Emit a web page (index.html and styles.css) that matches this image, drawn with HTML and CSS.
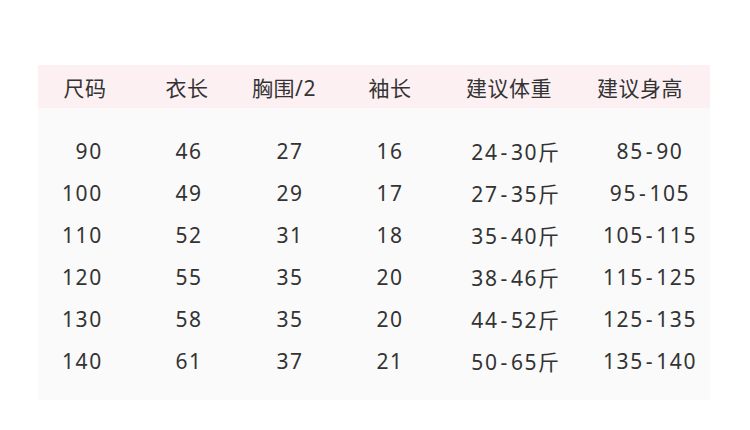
FILE: index.html
```html
<!DOCTYPE html>
<html lang="zh">
<head>
<meta charset="utf-8">
<link rel="stylesheet" href="styles.css">
</head>
<body>
<div class="table">
  <div class="row head">
    <div class="c c1">尺码</div><div class="c c2">衣长</div><div class="c c3">胸围/2</div><div class="c c4">袖长</div><div class="c c5">建议体重</div><div class="c c6">建议身高</div>
  </div>
  <div class="body">
    <div class="row"><div class="c c1">&#8199;90</div><div class="c c2">46</div><div class="c c3">27</div><div class="c c4">16</div><div class="c c5">24<span class="d">-</span>30斤</div><div class="c c6">85<span class="d">-</span>90</div></div>
    <div class="row"><div class="c c1">100</div><div class="c c2">49</div><div class="c c3">29</div><div class="c c4">17</div><div class="c c5">27<span class="d">-</span>35斤</div><div class="c c6">95<span class="d">-</span>105</div></div>
    <div class="row"><div class="c c1">110</div><div class="c c2">52</div><div class="c c3">31</div><div class="c c4">18</div><div class="c c5">35<span class="d">-</span>40斤</div><div class="c c6">105<span class="d">-</span>115</div></div>
    <div class="row"><div class="c c1">120</div><div class="c c2">55</div><div class="c c3">35</div><div class="c c4">20</div><div class="c c5">38<span class="d">-</span>46斤</div><div class="c c6">115<span class="d">-</span>125</div></div>
    <div class="row"><div class="c c1">130</div><div class="c c2">58</div><div class="c c3">35</div><div class="c c4">20</div><div class="c c5">44<span class="d">-</span>52斤</div><div class="c c6">125<span class="d">-</span>135</div></div>
    <div class="row"><div class="c c1">140</div><div class="c c2">61</div><div class="c c3">37</div><div class="c c4">21</div><div class="c c5">50<span class="d">-</span>65斤</div><div class="c c6">135<span class="d">-</span>140</div></div>
  </div>
</div>
</body>
</html>
```
FILE: styles.css
```css
html, body {
  margin: 0;
  padding: 0;
  background: #ffffff;
}
body {
  width: 750px;
  height: 430px;
  overflow: hidden;
  font-family: "Noto Sans", "Noto Sans CJK SC", sans-serif;
  color: #333333;
}
.table {
  margin: 65px 0 0 38px;
  width: 672px;
}
.row {
  display: grid;
  grid-template-columns: 94px 110px 90px 116px 130px 132px;
  height: 42px;
  align-items: center;
  font-size: 21px;
  letter-spacing: 1.6px;
}
.head {
  height: 43px;
  background: #fdf0f3;
  letter-spacing: 0.5px;
}
.body {
  background: #fafafa;
  padding: 22px 0 18px;
}
.c {
  text-align: center;
  white-space: nowrap;
}
.d {
  margin: 0 2px;
}
.head .c5, .head .c6 { padding-right: 8px; }
.head .c3 { padding-right: 6px; }
.body .c1 { text-align: left; padding-left: 24px; }
.body .c2 { padding-left: 4px; }
.body .c3 { padding-left: 6px; }
.body .c5 { padding-left: 6px; }
.body .c6 { padding-left: 12px; }
```
